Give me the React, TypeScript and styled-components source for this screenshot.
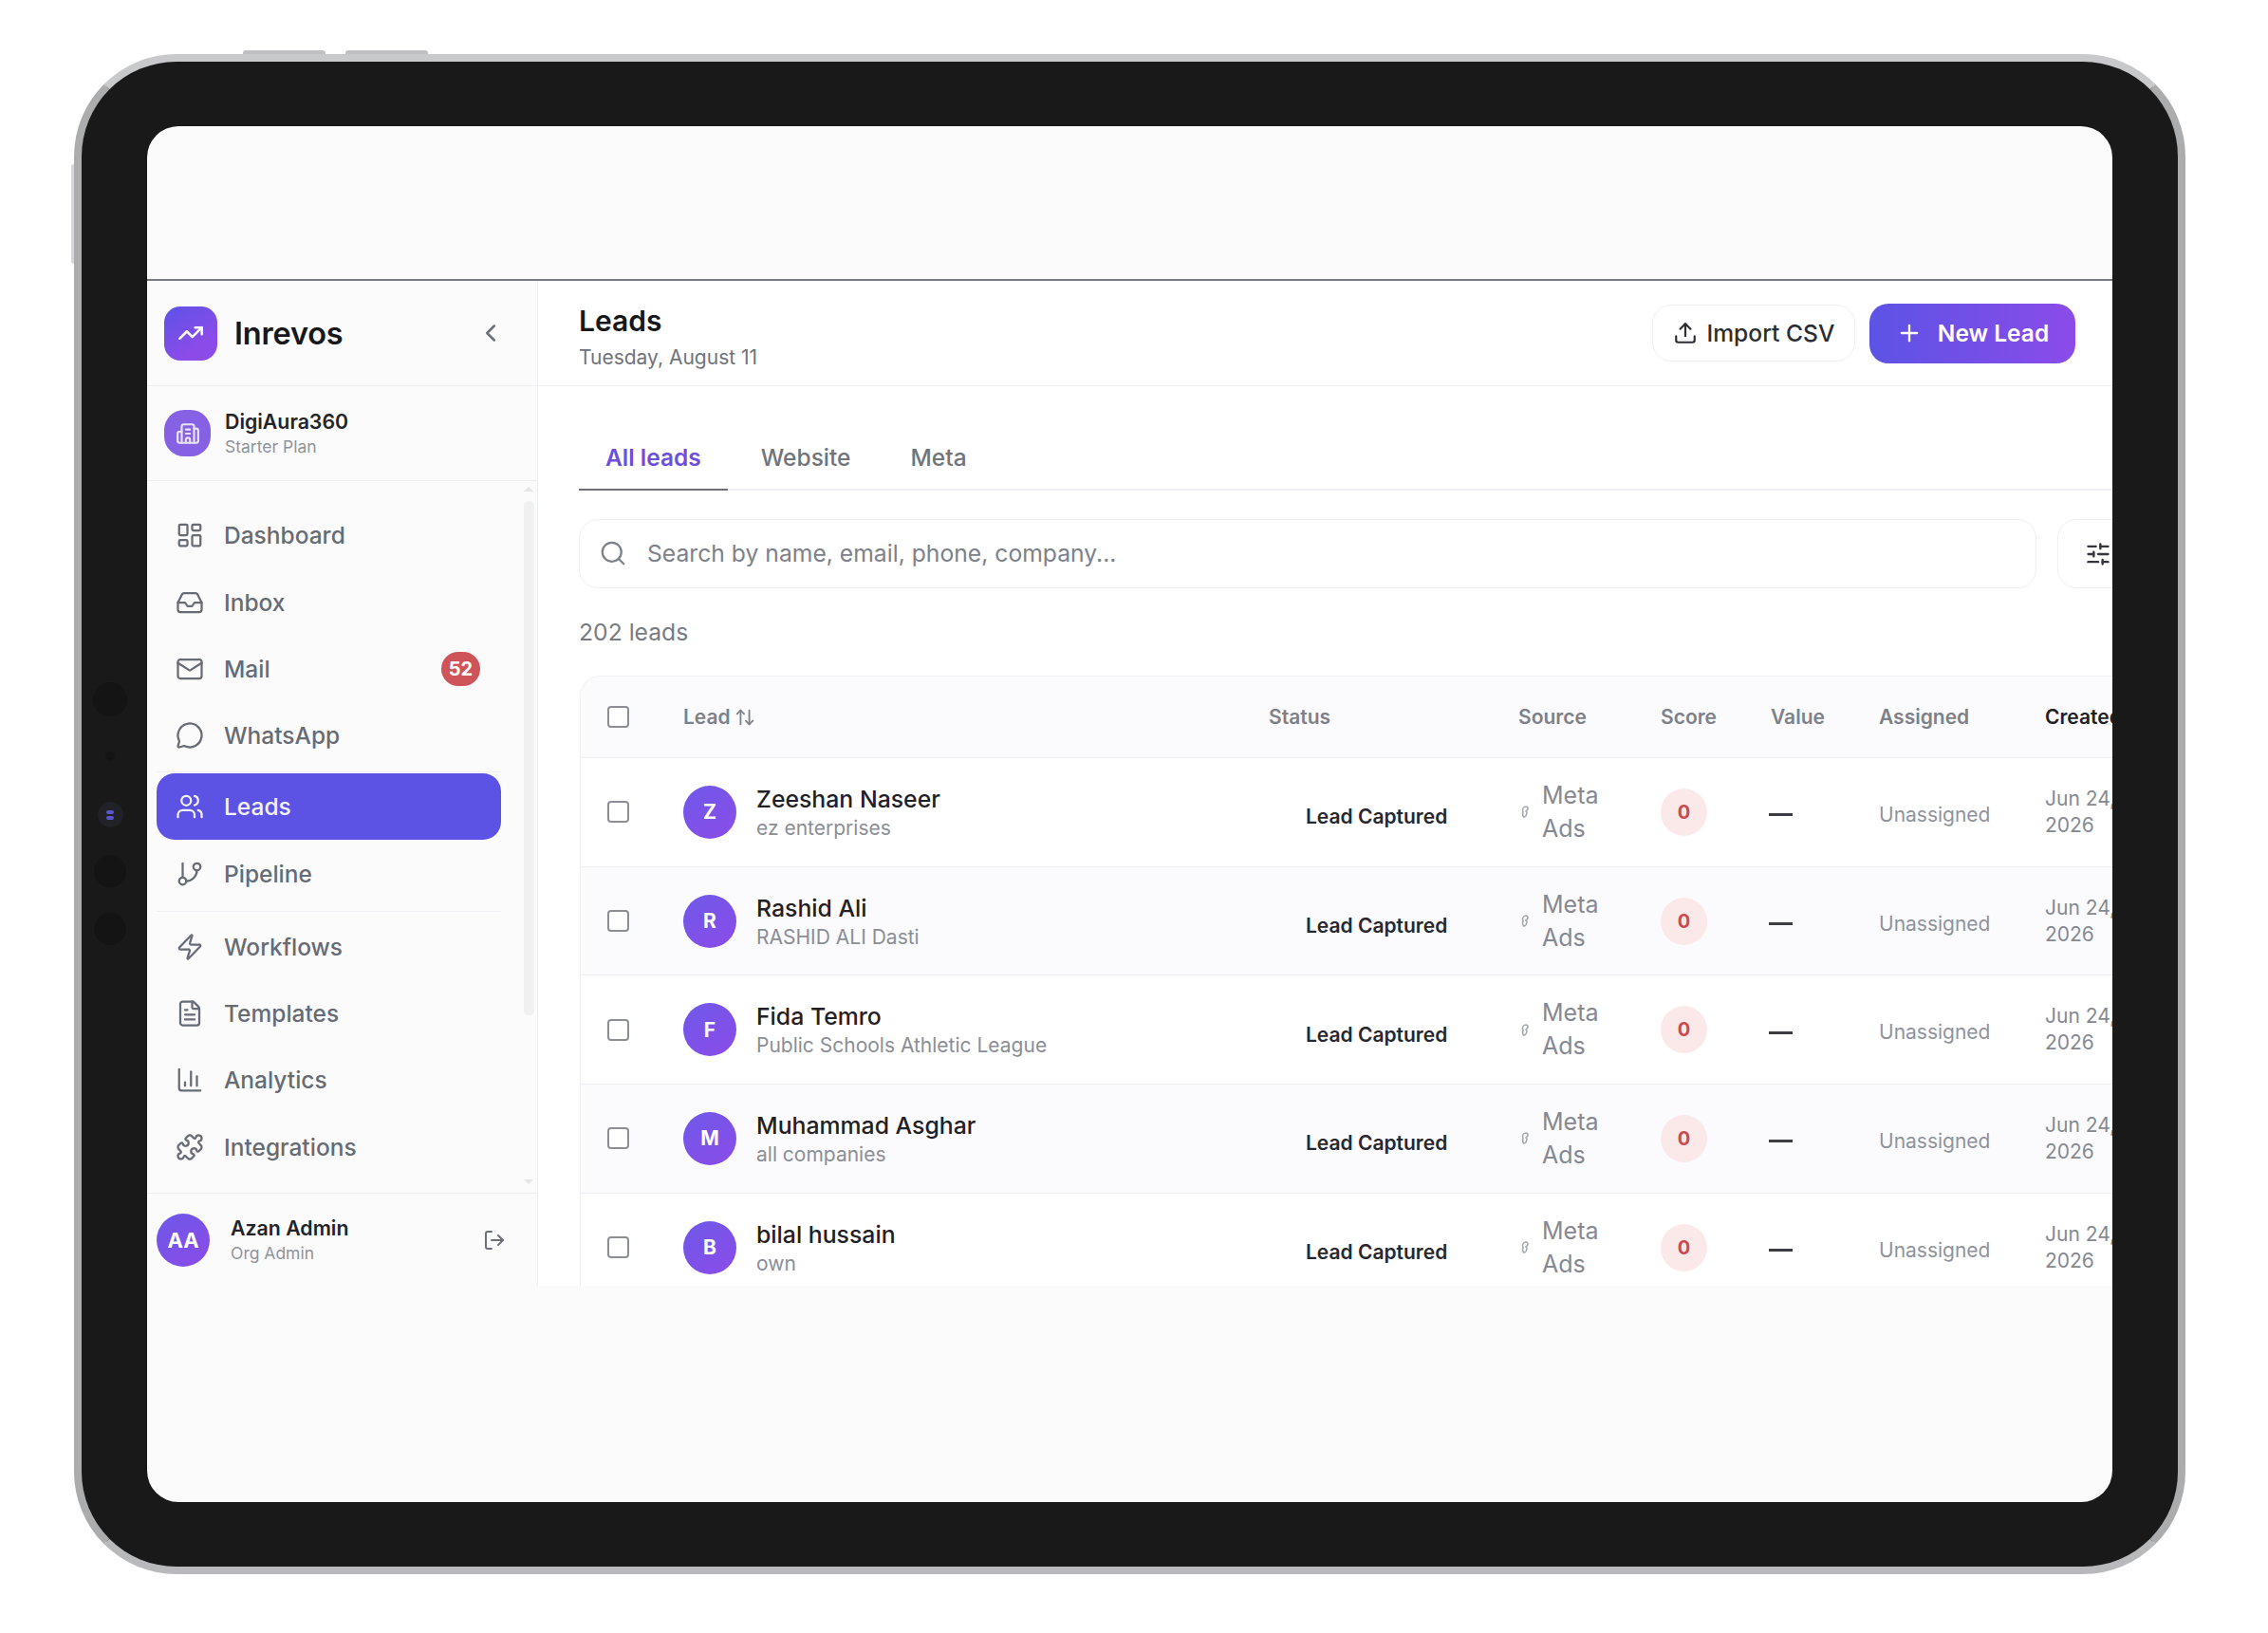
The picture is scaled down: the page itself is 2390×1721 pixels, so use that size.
import React from "react";
import styled, { createGlobalStyle } from "styled-components";
import {
  ArrowUpDown,
  BarChart3,
  Building2,
  ChevronLeft,
  FileText,
  GitBranch,
  Inbox,
  LayoutDashboard,
  LogOut,
  Mail,
  MessageCircle,
  Plus,
  Puzzle,
  Search,
  SlidersHorizontal,
  TrendingUp,
  Upload,
  Users,
  Zap,
} from "lucide-react";

const GlobalStyle = createGlobalStyle`
  html, body {
    margin: 0;
    padding: 0;
    background: #ffffff;
  }

  body {
    font-family: Inter, "Liberation Sans", sans-serif;
    color: #17181c;
  }
`;

const Page = styled.div`
  width: 2390px;
  height: 1721px;
  padding: 57px 87px 0 78px;
  box-sizing: border-box;
  overflow: hidden;
`;

const Device = styled.div`
  position: relative;
  width: 2225px;
  height: 1602px;
  box-sizing: border-box;
  padding: 68px 69px 68px 69px;
  background: #191919;
  border: 8px solid #aaacae;
  border-top-color: #c8c9ca;
  border-bottom-color: #b8b9ba;
  border-radius: 108px;
`;

const TopButton = styled.div<{ $left: number }>`
  position: absolute;
  top: -12px;
  left: ${(p) => p.$left}px;
  width: 87px;
  height: 4px;
  background: #bfc0c1;
  border-radius: 3px 3px 0 0;
`;

const SideButton = styled.div`
  position: absolute;
  top: 108px;
  left: -11px;
  width: 3px;
  height: 105px;
  background: #d4d5d6;
  border-radius: 3px 0 0 3px;
`;

const CameraRail = styled.div`
  position: absolute;
  left: 0;
  top: 654px;
  width: 60px;
  display: flex;
  flex-direction: column;
  align-items: center;
`;

const Dimple = styled.div<{ $size: number; $gap: number }>`
  width: ${(p) => p.$size}px;
  height: ${(p) => p.$size}px;
  margin-bottom: ${(p) => p.$gap}px;
  border-radius: 50%;
  background: #141414;
`;

const Lens = styled.div`
  width: 27px;
  height: 27px;
  margin-bottom: 29px;
  border-radius: 50%;
  background: #212227;
  display: flex;
  flex-direction: column;
  align-items: center;
  justify-content: center;
  gap: 2px;

  &::before,
  &::after {
    content: "";
    width: 8px;
    height: 4px;
    border-radius: 2px;
    background: #5a55c8;
  }
`;

const Screen = styled.div`
  height: 100%;
  background: #fbfbfc;
  border-radius: 33px;
  overflow: hidden;
  display: flex;
  flex-direction: column;
`;

const BlankTop = styled.div`
  height: 161px;
  flex: none;
  border-bottom: 2px solid #77797c;
`;

const AppFrame = styled.div`
  height: 1059px;
  flex: none;
  display: flex;
  overflow: hidden;
`;

const Sidebar = styled.aside`
  width: 412px;
  flex: none;
  box-sizing: border-box;
  display: flex;
  flex-direction: column;
  background: #fbfbfc;
  border-right: 1.5px solid #eeeff2;
`;

const Brand = styled.div`
  height: 111px;
  flex: none;
  box-sizing: border-box;
  padding: 0 18px;
  display: flex;
  align-items: center;
  border-bottom: 1.5px solid #eeeff2;
`;

const BrandMark = styled.div`
  width: 56px;
  height: 57px;
  flex: none;
  display: flex;
  align-items: center;
  justify-content: center;
  color: #fff;
  border-radius: 17px;
  background: linear-gradient(145deg, #5b53e6, #8b4be9 70%);
`;

const BrandName = styled.div`
  flex: 1;
  margin-left: 18px;
  font-size: 32.5px;
  font-weight: 600;
  letter-spacing: -0.2px;
`;

const Collapse = styled.div`
  display: flex;
  color: #6b7078;
  margin-right: 16px;
`;

const OrgRow = styled.div`
  height: 100px;
  flex: none;
  box-sizing: border-box;
  padding: 0 18px;
  display: flex;
  align-items: center;
  gap: 15px;
  border-bottom: 1.5px solid #eeeff2;
`;

const OrgMark = styled.div`
  width: 49px;
  height: 49px;
  flex: none;
  display: flex;
  align-items: center;
  justify-content: center;
  color: #e9e2fb;
  border-radius: 21px;
  background: #8661e4;
`;

const StackText = styled.div`
  display: flex;
  flex-direction: column;
`;

const OrgName = styled.div`
  font-size: 21.3px;
  font-weight: 600;
  line-height: 27px;
  color: #22242a;
`;

const SmallMuted = styled.div`
  font-size: 17.5px;
  line-height: 25px;
  color: #8f939b;
`;

const NavArea = styled.div`
  position: relative;
  flex: 1;
  min-height: 0;
  box-sizing: border-box;
  padding: 22px 38px 0 10px;
`;

const Scrollbar = styled.div`
  position: absolute;
  top: 21px;
  right: 3px;
  width: 11px;
  height: 542px;
  border-radius: 6px;
  background: #eef0f2;
`;

const ScrollArrow = styled.div<{ $down?: boolean }>`
  position: absolute;
  right: 4px;
  ${(p) => (p.$down ? "bottom: 9px;" : "top: 6px;")}
  width: 0;
  height: 0;
  border-left: 5px solid transparent;
  border-right: 5px solid transparent;
  ${(p) => (p.$down ? "border-top" : "border-bottom")}: 5px solid #e3e5e8;
`;

const NavGroup = styled.div<{ $divider?: boolean }>`
  padding-bottom: 2px;
  ${(p) => (p.$divider ? "border-top: 1.5px solid #eeeff2; padding-top: 1.5px; padding-bottom: 4px;" : "")}
`;

const NavItem = styled.div<{ $active?: boolean }>`
  height: 70.4px;
  box-sizing: border-box;
  padding: 0 20px;
  display: flex;
  align-items: center;
  gap: 21px;
  font-size: 24.5px;
  font-weight: 500;
  border-radius: 19px;
  color: ${(p) => (p.$active ? "#f4f2ff" : "#666b74")};
  background: ${(p) => (p.$active ? "#5c53e5" : "transparent")};
`;

const NavLabel = styled.span`
  flex: 1;
`;

const CountBadge = styled.span`
  width: 41px;
  height: 36px;
  display: flex;
  align-items: center;
  justify-content: center;
  margin-right: 2px;
  font-size: 20px;
  font-weight: 700;
  color: #fff;
  border-radius: 18px;
  background: #cf5459;
`;

const UserRow = styled.div`
  height: 98px;
  flex: none;
  box-sizing: border-box;
  padding: 0 33px 0 10px;
  display: flex;
  align-items: center;
  gap: 22px;
  border-top: 1.5px solid #eeeff2;
`;

const UserAvatar = styled.div`
  width: 56px;
  height: 56px;
  flex: none;
  display: flex;
  align-items: center;
  justify-content: center;
  color: #fff;
  font-size: 22px;
  font-weight: 700;
  border-radius: 50%;
  background: linear-gradient(145deg, #6d58e8, #8b4be9);
`;

const UserText = styled(StackText)`
  flex: 1;
`;

const LogoutIcon = styled.div`
  display: flex;
  color: #6b7078;
`;

const Main = styled.main`
  flex: 1;
  min-width: 0;
  display: flex;
  flex-direction: column;
  background: #ffffff;
`;

const Header = styled.header`
  height: 111px;
  flex: none;
  box-sizing: border-box;
  padding: 0 39px 0 43px;
  display: flex;
  align-items: center;
  justify-content: space-between;
  border-bottom: 1.5px solid #eeeff2;
`;

const HeaderTitles = styled.div`
  padding-top: 7px;
`;

const Title = styled.h1`
  margin: 0;
  font-size: 30px;
  font-weight: 600;
  line-height: 38px;
`;

const DateLine = styled.div`
  margin-top: 6px;
  font-size: 21px;
  line-height: 28px;
  color: #6f737b;
`;

const HeaderActions = styled.div`
  display: flex;
  align-items: center;
  gap: 15px;
`;

const OutlineButton = styled.button`
  width: 214px;
  height: 60px;
  padding: 0;
  display: flex;
  align-items: center;
  justify-content: center;
  gap: 10px;
  font: 500 24.6px Inter, sans-serif;
  color: #2b2d33;
  background: #fff;
  border: 1.5px solid #eeeff2;
  border-radius: 20px;
`;

const PrimaryButton = styled.button`
  width: 217px;
  height: 63px;
  padding: 0;
  display: flex;
  align-items: center;
  justify-content: center;
  gap: 16px;
  font: 600 24.5px Inter, sans-serif;
  color: #fff;
  border: none;
  border-radius: 20px;
  background: linear-gradient(90deg, #5c53e5, #8b4be9);
`;

const Content = styled.div`
  flex: 1;
  min-height: 0;
  padding-left: 43px;
  display: flex;
  flex-direction: column;
`;

const Tabs = styled.div`
  height: 110px;
  flex: none;
  box-sizing: border-box;
  padding-top: 37px;
  display: flex;
  align-items: stretch;
  border-bottom: 2px solid #eeeff2;
`;

const Tab = styled.div<{ $active?: boolean }>`
  height: 73px;
  box-sizing: border-box;
  padding: 4px 28px 0;
  margin-right: 7px;
  display: flex;
  align-items: center;
  font-size: 24.5px;
  font-weight: ${(p) => (p.$active ? 600 : 500)};
  color: ${(p) => (p.$active ? "#6d4fdc" : "#70747c")};
  border-bottom: 2px solid ${(p) => (p.$active ? "#6f7075" : "transparent")};
`;

const SearchRow = styled.div`
  flex: none;
  margin-top: 30px;
  display: flex;
  gap: 22px;
  width: 1700px;
`;

const SearchBox = styled.div`
  width: 1536px;
  height: 73px;
  flex: none;
  box-sizing: border-box;
  padding: 0 20px 2px;
  display: flex;
  align-items: center;
  gap: 21px;
  font-size: 24.7px;
  color: #7d8189;
  border: 1.5px solid #eeeff2;
  border-radius: 20px;
`;

const FilterButton = styled.div`
  width: 90px;
  height: 73px;
  flex: none;
  box-sizing: border-box;
  padding-left: 28px;
  display: flex;
  align-items: center;
  color: #33353b;
  border: 1.5px solid #eeeff2;
  border-radius: 20px;
`;

const LeadCount = styled.div`
  flex: none;
  margin-top: 31px;
  font-size: 24.7px;
  line-height: 30px;
  color: #777b83;
`;

const TableCard = styled.div`
  flex: 1;
  min-height: 0;
  margin: 31px 0 0 1px;
  border-top: 1.5px solid #eeeff2;
  border-left: 1.5px solid #eeeff2;
  border-radius: 22px 0 0 0;
  overflow: hidden;
`;

const gridColumns = "108px 617px 263px 150px 116px 114px 175px 200px";

const HeadRow = styled.div`
  height: 86px;
  box-sizing: border-box;
  display: grid;
  grid-template-columns: ${gridColumns};
  align-items: center;
  background: #fbfbfd;
  border-bottom: 1.5px solid #eeeff2;
`;

const HeadCell = styled.div<{ $dark?: boolean }>`
  display: flex;
  align-items: center;
  gap: 4px;
  font-size: 21px;
  font-weight: 600;
  color: ${(p) => (p.$dark ? "#1f2126" : "#7d8189")};
  white-space: nowrap;
`;

const CheckCell = styled.div`
  padding-left: 28px;
  display: flex;
`;

const Check = styled.div`
  width: 23px;
  height: 23px;
  box-sizing: border-box;
  border: 2px solid #8b8e94;
  border-radius: 4px;
  background: #fff;
`;

const Row = styled.div<{ $tint: boolean }>`
  height: 114.7px;
  box-sizing: border-box;
  display: grid;
  grid-template-columns: ${gridColumns};
  align-items: center;
  background: ${(p) => (p.$tint ? "#fbfbfd" : "#ffffff")};
  border-bottom: 1.5px solid #eeeff2;
`;

const LeadCell = styled.div`
  display: flex;
  align-items: center;
  gap: 21px;
`;

const LeadText = styled(StackText)`
  padding-top: 2px;
`;

const Initial = styled.div`
  width: 56px;
  height: 56px;
  flex: none;
  display: flex;
  align-items: center;
  justify-content: center;
  color: #fff;
  font-size: 21px;
  font-weight: 700;
  border-radius: 50%;
  background: linear-gradient(145deg, #6f59e9, #8b4be9);
`;

const LeadName = styled.div`
  font-size: 24.8px;
  font-weight: 500;
  line-height: 32px;
  color: #1f2126;
`;

const LeadCompany = styled.div`
  font-size: 21px;
  line-height: 30px;
  color: #8a8e96;
`;

const StatusCell = styled.div`
  padding: 10px 0 0 39px;
  font-size: 21px;
  font-weight: 600;
  color: #26282e;
  white-space: nowrap;
`;

const SourceCell = styled.div`
  display: flex;
  align-items: center;
  gap: 14px;
  padding-left: 3px;
  font-size: 25px;
  line-height: 35px;
  color: #858992;
`;

const SourceMark = styled.svg`
  width: 8px;
  height: 13px;
  flex: none;
  fill: none;
  stroke: #a4a7ad;
  stroke-width: 1.6;
`;

const ScorePill = styled.div`
  width: 49px;
  height: 50px;
  display: flex;
  align-items: center;
  justify-content: center;
  font-size: 20px;
  font-weight: 700;
  color: #cb4a50;
  border-radius: 50%;
  background: #fbe9e9;
`;

const ValueDash = styled.div`
  width: 25px;
  height: 3px;
  margin: 6px 0 0 -2px;
  background: #3b3d43;
`;

const AssignedCell = styled.div`
  padding-top: 5px;
  font-size: 21px;
  color: #8f939b;
`;

const CreatedCell = styled.div`
  font-size: 21px;
  line-height: 28px;
  color: #858992;
  white-space: nowrap;
`;

type NavEntry = {
  label: string;
  icon: React.ComponentType<{ size?: number; strokeWidth?: number }>;
  count?: number;
  active?: boolean;
};

const navTop: NavEntry[] = [
  { label: "Dashboard", icon: LayoutDashboard },
  { label: "Inbox", icon: Inbox },
  { label: "Mail", icon: Mail, count: 52 },
  { label: "WhatsApp", icon: MessageCircle },
];

const navMiddle: NavEntry[] = [
  { label: "Leads", icon: Users, active: true },
  { label: "Pipeline", icon: GitBranch },
];

const navBottom: NavEntry[] = [
  { label: "Workflows", icon: Zap },
  { label: "Templates", icon: FileText },
  { label: "Analytics", icon: BarChart3 },
  { label: "Integrations", icon: Puzzle },
];

const leads = [
  { name: "Zeeshan Naseer", company: "ez enterprises" },
  { name: "Rashid Ali", company: "RASHID ALI Dasti" },
  { name: "Fida Temro", company: "Public Schools Athletic League" },
  { name: "Muhammad Asghar", company: "all companies" },
  { name: "bilal hussain", company: "own" },
];

const NavList = ({ items }: { items: NavEntry[] }) => (
  <>
    {items.map((item) => (
      <NavItem key={item.label} $active={item.active}>
        <item.icon size={30} strokeWidth={1.8} />
        <NavLabel>{item.label}</NavLabel>
        {item.count ? <CountBadge>{item.count}</CountBadge> : null}
      </NavItem>
    ))}
  </>
);

const App = () => {
  return (
    <Page>
      <GlobalStyle />
      <Device>
        <TopButton $left={170} />
        <TopButton $left={278} />
        <SideButton />
        <CameraRail>
          <Dimple $size={36} $gap={37} />
          <Dimple $size={10} $gap={43} />
          <Lens />
          <Dimple $size={34} $gap={27} />
          <Dimple $size={34} $gap={0} />
        </CameraRail>
        <Screen>
          <BlankTop />
          <AppFrame>
            <Sidebar>
              <Brand>
                <BrandMark>
                  <TrendingUp size={28} strokeWidth={2.2} />
                </BrandMark>
                <BrandName>Inrevos</BrandName>
                <Collapse>
                  <ChevronLeft size={30} strokeWidth={2} />
                </Collapse>
              </Brand>
              <OrgRow>
                <OrgMark>
                  <Building2 size={26} strokeWidth={2} />
                </OrgMark>
                <StackText>
                  <OrgName>DigiAura360</OrgName>
                  <SmallMuted>Starter Plan</SmallMuted>
                </StackText>
              </OrgRow>
              <NavArea>
                <ScrollArrow />
                <Scrollbar />
                <ScrollArrow $down />
                <NavGroup>
                  <NavList items={navTop} />
                </NavGroup>
                <NavGroup $divider>
                  <NavList items={navMiddle} />
                </NavGroup>
                <NavGroup $divider>
                  <NavList items={navBottom} />
                </NavGroup>
              </NavArea>
              <UserRow>
                <UserAvatar>AA</UserAvatar>
                <UserText>
                  <OrgName>Azan Admin</OrgName>
                  <SmallMuted>Org Admin</SmallMuted>
                </UserText>
                <LogoutIcon>
                  <LogOut size={24} strokeWidth={2} />
                </LogoutIcon>
              </UserRow>
            </Sidebar>
            <Main>
              <Header>
                <HeaderTitles>
                  <Title>Leads</Title>
                  <DateLine>Tuesday, August 11</DateLine>
                </HeaderTitles>
                <HeaderActions>
                  <OutlineButton>
                    <Upload size={26} strokeWidth={2} />
                    Import CSV
                  </OutlineButton>
                  <PrimaryButton>
                    <Plus size={28} strokeWidth={2} />
                    New Lead
                  </PrimaryButton>
                </HeaderActions>
              </Header>
              <Content>
                <Tabs>
                  <Tab $active>All leads</Tab>
                  <Tab>Website</Tab>
                  <Tab>Meta</Tab>
                </Tabs>
                <SearchRow>
                  <SearchBox>
                    <Search size={30} strokeWidth={1.8} />
                    Search by name, email, phone, company...
                  </SearchBox>
                  <FilterButton>
                    <SlidersHorizontal size={28} strokeWidth={2} />
                  </FilterButton>
                </SearchRow>
                <LeadCount>202 leads</LeadCount>
                <TableCard>
                  <HeadRow>
                    <CheckCell>
                      <Check />
                    </CheckCell>
                    <HeadCell>
                      Lead <ArrowUpDown size={22} strokeWidth={2} />
                    </HeadCell>
                    <HeadCell>Status</HeadCell>
                    <HeadCell>Source</HeadCell>
                    <HeadCell>Score</HeadCell>
                    <HeadCell>Value</HeadCell>
                    <HeadCell>Assigned</HeadCell>
                    <HeadCell $dark>Created</HeadCell>
                  </HeadRow>
                  {leads.map((lead, i) => (
                    <Row key={lead.name} $tint={i % 2 === 1}>
                      <CheckCell>
                        <Check />
                      </CheckCell>
                      <LeadCell>
                        <Initial>{lead.name[0].toUpperCase()}</Initial>
                        <LeadText>
                          <LeadName>{lead.name}</LeadName>
                          <LeadCompany>{lead.company}</LeadCompany>
                        </LeadText>
                      </LeadCell>
                      <StatusCell>Lead Captured</StatusCell>
                      <SourceCell>
                        <SourceMark viewBox="0 0 8 13">
                          <path d="M5 1C7 1 7.500 3 6.500 4.500L5 6l1 1C6 9.500 4.500 12 2.500 12 1.500 10 1 8.500 2 7L1.500 5C1.500 3 3 1 5 1Z" />
                        </SourceMark>
                        <div>
                          Meta
                          <br />
                          Ads
                        </div>
                      </SourceCell>
                      <ScorePill>0</ScorePill>
                      <ValueDash />
                      <AssignedCell>Unassigned</AssignedCell>
                      <CreatedCell>
                        Jun 24,
                        <br />
                        2026
                      </CreatedCell>
                    </Row>
                  ))}
                </TableCard>
              </Content>
            </Main>
          </AppFrame>
        </Screen>
      </Device>
    </Page>
  );
};

export default App;
